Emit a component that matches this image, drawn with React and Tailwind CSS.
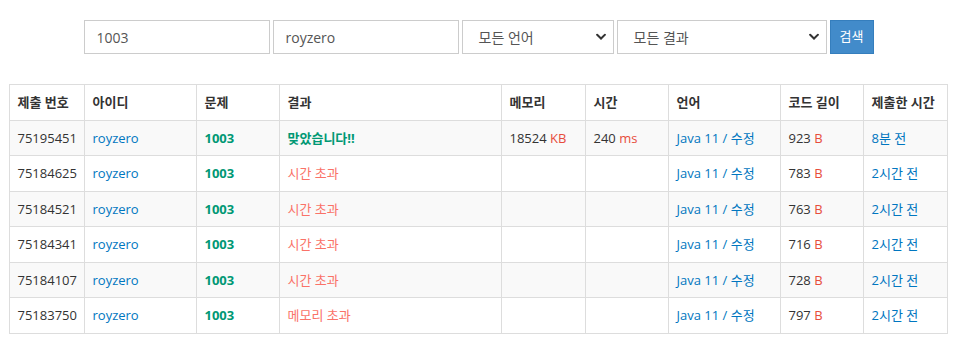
import React from "react";

const rows = [
  { id: "75195451", result: "맞았습니다!!", ok: true, mem: "18524", time: "240", len: "923", when: "8분 전" },
  { id: "75184625", result: "시간 초과", len: "783", when: "2시간 전" },
  { id: "75184521", result: "시간 초과", len: "763", when: "2시간 전" },
  { id: "75184341", result: "시간 초과", len: "716", when: "2시간 전" },
  { id: "75184107", result: "시간 초과", len: "728", when: "2시간 전" },
  { id: "75183750", result: "메모리 초과", len: "797", when: "2시간 전" },
];

const headers = ["제출 번호", "아이디", "문제", "결과", "메모리", "시간", "언어", "코드 길이", "제출한 시간"];

function Chevron() {
  return (
    <svg className="pointer-events-none absolute right-[7px] top-1/2 -translate-y-1/2" width="10" height="7" viewBox="0 0 10 7">
      <path d="M1.2 1.3 L5 5 L8.8 1.3" fill="none" stroke="#333" strokeWidth="2" strokeLinecap="square" />
    </svg>
  );
}

export default function App() {
  const font = { fontFamily: '"Open Sans", "Noto Sans CJK KR", sans-serif' };
  return (
    <div className="w-[957px] h-[340px] bg-white text-[#333]" style={font}>
      <div className="flex justify-center gap-[3px] pt-[20px]">
        <input
          defaultValue="1003"
          className="h-[34px] w-[186px] border border-[#ccc] px-[12px] text-[14px] text-[#555] outline-none"
        />
        <input
          defaultValue="royzero"
          className="h-[34px] w-[186px] border border-[#ccc] px-[12px] text-[14px] text-[#555] outline-none"
        />
        <div className="relative h-[34px] w-[152px] border border-[#ccc] bg-white">
          <div className="flex h-full items-center pl-[16px] text-[14px] text-[#555]">모든 언어</div>
          <Chevron />
        </div>
        <div className="relative h-[34px] w-[210px] border border-[#ccc] bg-white">
          <div className="flex h-full items-center pl-[16px] text-[14px] text-[#555]">모든 결과</div>
          <Chevron />
        </div>
        <button className="h-[34px] w-[44px] border border-[#357ebd] bg-[#428bca] text-[13px] text-white">
          검색
        </button>
      </div>

      <div className="mx-auto mt-[30px] w-[940px]">
        <table className="w-[938px] table-fixed border-collapse text-[13px] leading-[1.42857]">
          <colgroup>
            <col className="w-[75px]" />
            <col className="w-[112px]" />
            <col className="w-[83px]" />
            <col className="w-[222px]" />
            <col className="w-[84px]" />
            <col className="w-[83px]" />
            <col className="w-[112px]" />
            <col className="w-[83px]" />
            <col className="w-[84px]" />
          </colgroup>
          <thead>
            <tr>
              {headers.map((h) => (
                <th key={h} className="whitespace-nowrap border border-[#ddd] p-[8px] text-left font-bold text-[#333]">
                  {h}
                </th>
              ))}
            </tr>
          </thead>
          <tbody>
            {rows.map((r, i) => (
              <tr key={r.id} className={i % 2 === 0 ? "bg-[#f9f9f9]" : "bg-white"}>
                <td className="border border-[#ddd] p-[8px]">{r.id}</td>
                <td className="border border-[#ddd] p-[8px] text-[#0076c0]">royzero</td>
                <td className="border border-[#ddd] p-[8px] font-bold text-[#009874]">1003</td>
                <td className={"border border-[#ddd] p-[8px] " + (r.ok ? "font-bold text-[#009874]" : "text-[#fa7268]")}>
                  {r.result}
                </td>
                <td className="border border-[#ddd] p-[8px]">
                  {r.mem && (
                    <>
                      {r.mem} <span className="text-[#e74c3c]">KB</span>
                    </>
                  )}
                </td>
                <td className="border border-[#ddd] p-[8px]">
                  {r.time && (
                    <>
                      {r.time} <span className="text-[#e74c3c]">ms</span>
                    </>
                  )}
                </td>
                <td className="whitespace-nowrap border border-[#ddd] p-[8px] text-[#0076c0]">
                  Java 11 / 수정
                </td>
                <td className="border border-[#ddd] p-[8px]">
                  {r.len} <span className="text-[#e74c3c]">B</span>
                </td>
                <td className="whitespace-nowrap border border-[#ddd] p-[8px] text-[#0076c0]">{r.when}</td>
              </tr>
            ))}
          </tbody>
        </table>
      </div>
    </div>
  );
}
